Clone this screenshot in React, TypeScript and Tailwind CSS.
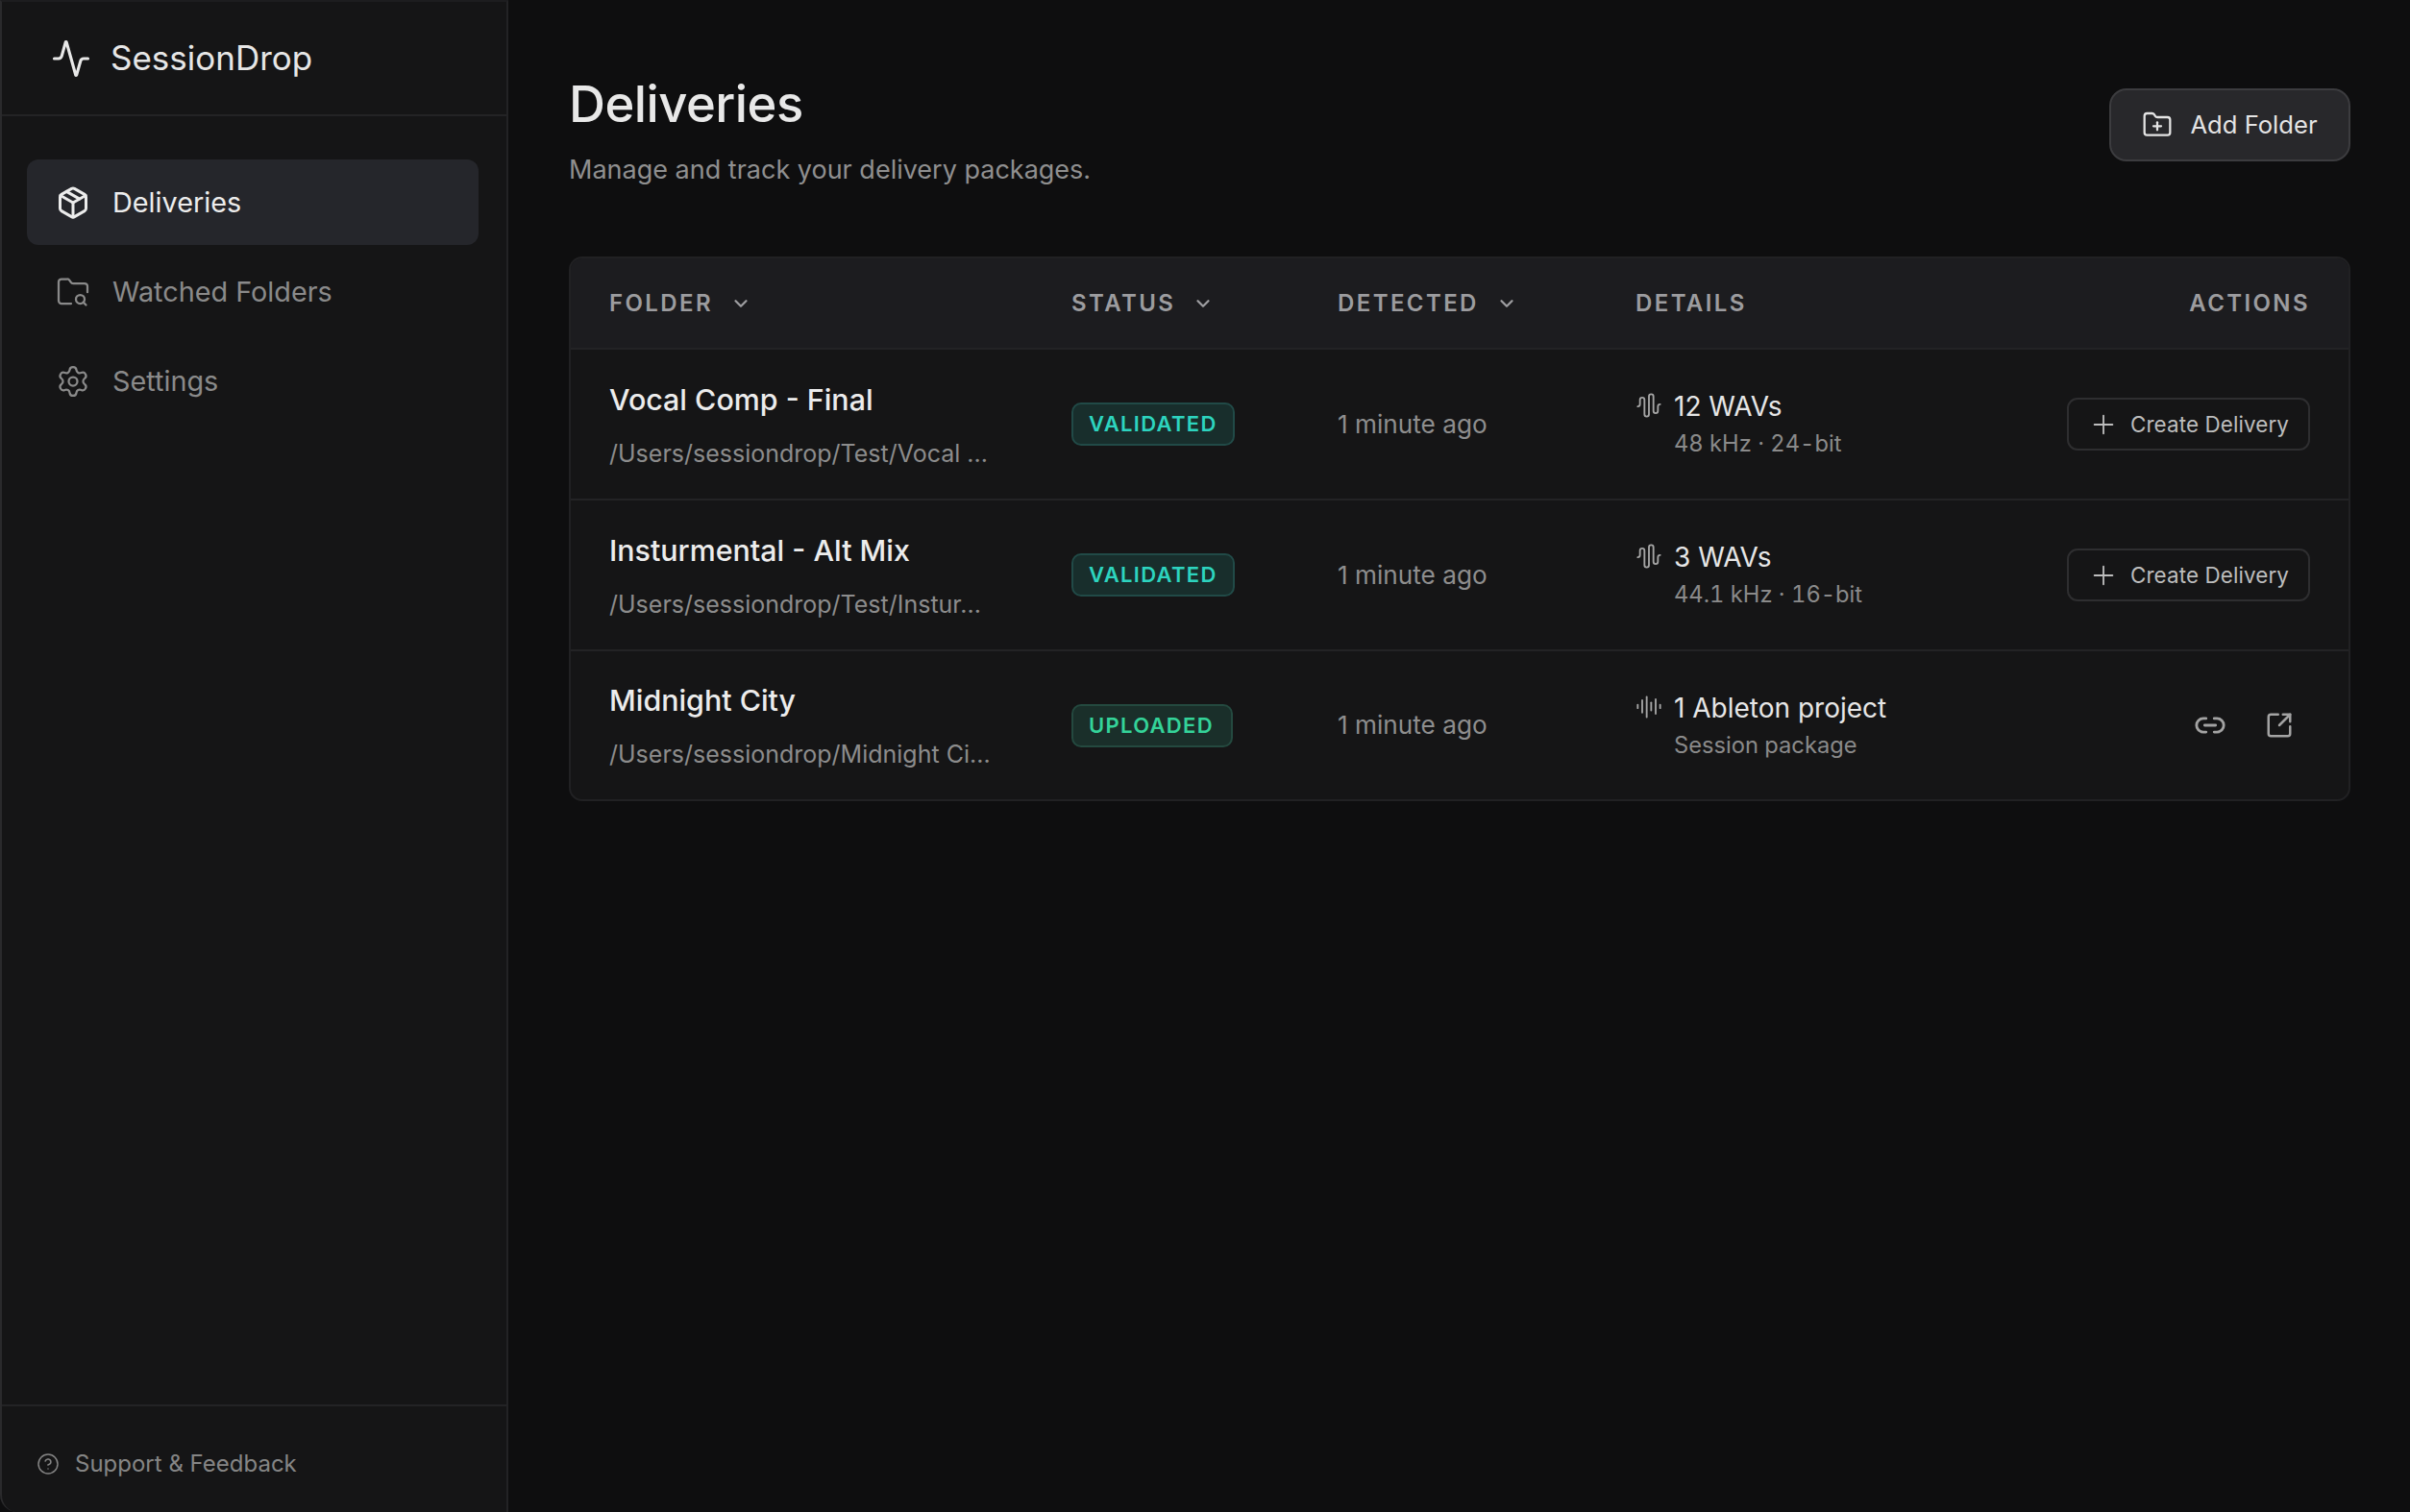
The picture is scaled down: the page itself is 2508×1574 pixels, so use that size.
import {
  Activity,
  AudioLines,
  AudioWaveform,
  ChevronDown,
  CircleHelp,
  FolderPlus,
  FolderSearch,
  Link2,
  Package,
  Plus,
  Settings,
  SquareArrowOutUpRight,
  type LucideIcon,
} from "lucide-react";

const NAV: { label: string; icon: LucideIcon; active?: boolean }[] = [
  { label: "Deliveries", icon: Package, active: true },
  { label: "Watched Folders", icon: FolderSearch },
  { label: "Settings", icon: Settings },
];

const ROWS = [
  {
    name: "Vocal Comp - Final",
    path: "/Users/sessiondrop/Test/Vocal ...",
    status: "VALIDATED",
    title: "12 WAVs",
    sub: "48 kHz · 24-bit",
    icon: AudioWaveform,
  },
  {
    name: "Insturmental - Alt Mix",
    path: "/Users/sessiondrop/Test/Instur...",
    status: "VALIDATED",
    title: "3 WAVs",
    sub: "44.1 kHz · 16-bit",
    icon: AudioWaveform,
  },
  {
    name: "Midnight City",
    path: "/Users/sessiondrop/Midnight Ci...",
    status: "UPLOADED",
    title: "1 Ableton project",
    sub: "Session package",
    icon: AudioLines,
  },
];

const COLS = "grid grid-cols-[481px_277px_310px_1fr_auto] items-center px-[40px]";

function Sidebar() {
  return (
    <aside className="flex w-[529px] shrink-0 flex-col rounded-bl-[18px] border-t-2 border-r-2 border-l-2 border-t-[#1d1d1f] border-r-[#232325] border-l-[#2a2a2c] bg-[#151516]">
      <div className="flex h-[119px] items-center gap-[20px] border-b-2 border-[#232325] pl-[51px]">
        <Activity className="h-[42px] w-[42px] text-[#e8e8e8]" strokeWidth={1.8} />
        <span className="text-[35px] text-[#e6e6e6]">SessionDrop</span>
      </div>
      <nav className="flex flex-1 flex-col gap-1 pt-[45px] pr-[29px] pl-[26px]">
        {NAV.map((item) => (
          <div
            key={item.label}
            className={`flex h-[89px] items-center gap-[23px] rounded-[12px] pl-[30px] ${
              item.active ? "bg-[#25262b] text-[#ececec]" : "text-[#8a8a8a]"
            }`}
          >
            <item.icon className="h-[36px] w-[36px]" strokeWidth={item.active ? 2 : 1.5} />
            <span className="text-[28.8px]">{item.label}</span>
          </div>
        ))}
      </nav>
      <div className="flex h-[112px] items-center gap-[16px] border-t-2 border-[#232325] pt-[10px] pl-[36px] text-[#858585]">
        <CircleHelp className="h-[24px] w-[24px]" strokeWidth={1.5} />
        <span className="text-[24px]">Support &amp; Feedback</span>
      </div>
    </aside>
  );
}

function HeaderCell({ label, sortable }: { label: string; sortable?: boolean }) {
  return (
    <div className="flex items-center gap-[18px]">
      <span>{label}</span>
      {sortable && <ChevronDown className="h-[22px] w-[22px]" strokeWidth={2.5} />}
    </div>
  );
}

function StatusBadge({ status }: { status: string }) {
  const uploaded = status === "UPLOADED";
  return (
    <span
      className={`inline-flex h-[45px] items-center rounded-[10px] border-2 px-[16px] text-[22px] font-semibold tracking-[0.06em] ${
        uploaded
          ? "border-[#24493f] bg-[#1a2f2a] pr-[18px] text-[#34d399]"
          : "border-[#214a47] bg-[#182e2c] text-[#2dd4bf]"
      }`}
    >
      {status}
    </span>
  );
}

export default function App() {
  return (
    <div className="flex h-[1574px] w-[2508px] overflow-hidden bg-[#0e0e0f] font-['Inter',sans-serif] antialiased">
      <Sidebar />
      <main className="min-w-0 flex-1 pt-[75px] pr-[62px] pl-[63px]">
        <div className="flex items-start justify-between">
          <div>
            <h1 className="text-[52.6px] leading-[66px] font-medium tracking-[-0.01em] text-[#e8e8e8]">Deliveries</h1>
            <p className="mt-[18px] text-[27px] leading-[36px] text-[#8f8f8f]">
              Manage and track your delivery packages.
            </p>
          </div>
          <button className="mt-[17px] flex h-[76px] w-[251px] items-center justify-center gap-[18px] rounded-[18px] border-2 border-[#3c3c3f] bg-[#28282b] text-[25.6px] text-[#e4e4e4]">
            <FolderPlus className="h-[32px] w-[32px]" strokeWidth={1.7} />
            Add Folder
          </button>
        </div>

        <div className="mt-[72px] overflow-hidden rounded-[14px] border-2 border-[#212123] bg-[#151516]">
          <div className={`${COLS} h-[93px] bg-[#1c1c1f] text-[24px] font-semibold tracking-[0.1em] text-[#9c9c9f]`}>
            <HeaderCell label="FOLDER" sortable />
            <HeaderCell label="STATUS" sortable />
            <HeaderCell label="DETECTED" sortable />
            <HeaderCell label="DETAILS" />
            <div className="text-right">ACTIONS</div>
          </div>
          {ROWS.map((row) => (
            <div key={row.name} className={`${COLS} h-[157px] border-t-2 border-[#232325] last:h-[156px]`}>
              <div>
                <div className="text-[30.4px] leading-[40px] font-medium text-[#ececec]">{row.name}</div>
                <div className="mt-[20px] text-[25px] leading-[32px] text-[#8c8c8c]">{row.path}</div>
              </div>
              <div className="flex">
                <StatusBadge status={row.status} />
              </div>
              <div className="text-[26.2px] text-[#8e8e8e]">1 minute ago</div>
              <div className="flex gap-[12px]">
                <row.icon className="mt-[2px] h-[28px] w-[28px] shrink-0 text-[#a5a5a5]" strokeWidth={1.6} />
                <div>
                  <div className="text-[28px] leading-[34px] text-[#e6e6e6]">{row.title}</div>
                  <div className="mt-[7px] text-[23.7px] leading-[30px] text-[#8a8a8a] tabular-nums">{row.sub}</div>
                </div>
              </div>
              <div className="flex justify-end">
                {row.status === "VALIDATED" ? (
                  <button className="flex h-[55px] w-[253px] items-center justify-center gap-[12px] rounded-[11px] border-2 border-[#2e2e30] text-[22.4px] tracking-[0.005em] text-[#bdbdbd]">
                    <Plus className="h-[32px] w-[32px]" strokeWidth={1.4} />
                    Create Delivery
                  </button>
                ) : (
                  <div className="flex gap-2 text-[#a3a3a3]">
                    <button className="flex h-16 w-16 items-center justify-center">
                      <Link2 className="h-[34px] w-[34px]" strokeWidth={2} />
                    </button>
                    <button className="flex h-16 w-16 items-center justify-center">
                      <SquareArrowOutUpRight className="h-[30px] w-[30px]" strokeWidth={2} />
                    </button>
                  </div>
                )}
              </div>
            </div>
          ))}
        </div>
      </main>
    </div>
  );
}
